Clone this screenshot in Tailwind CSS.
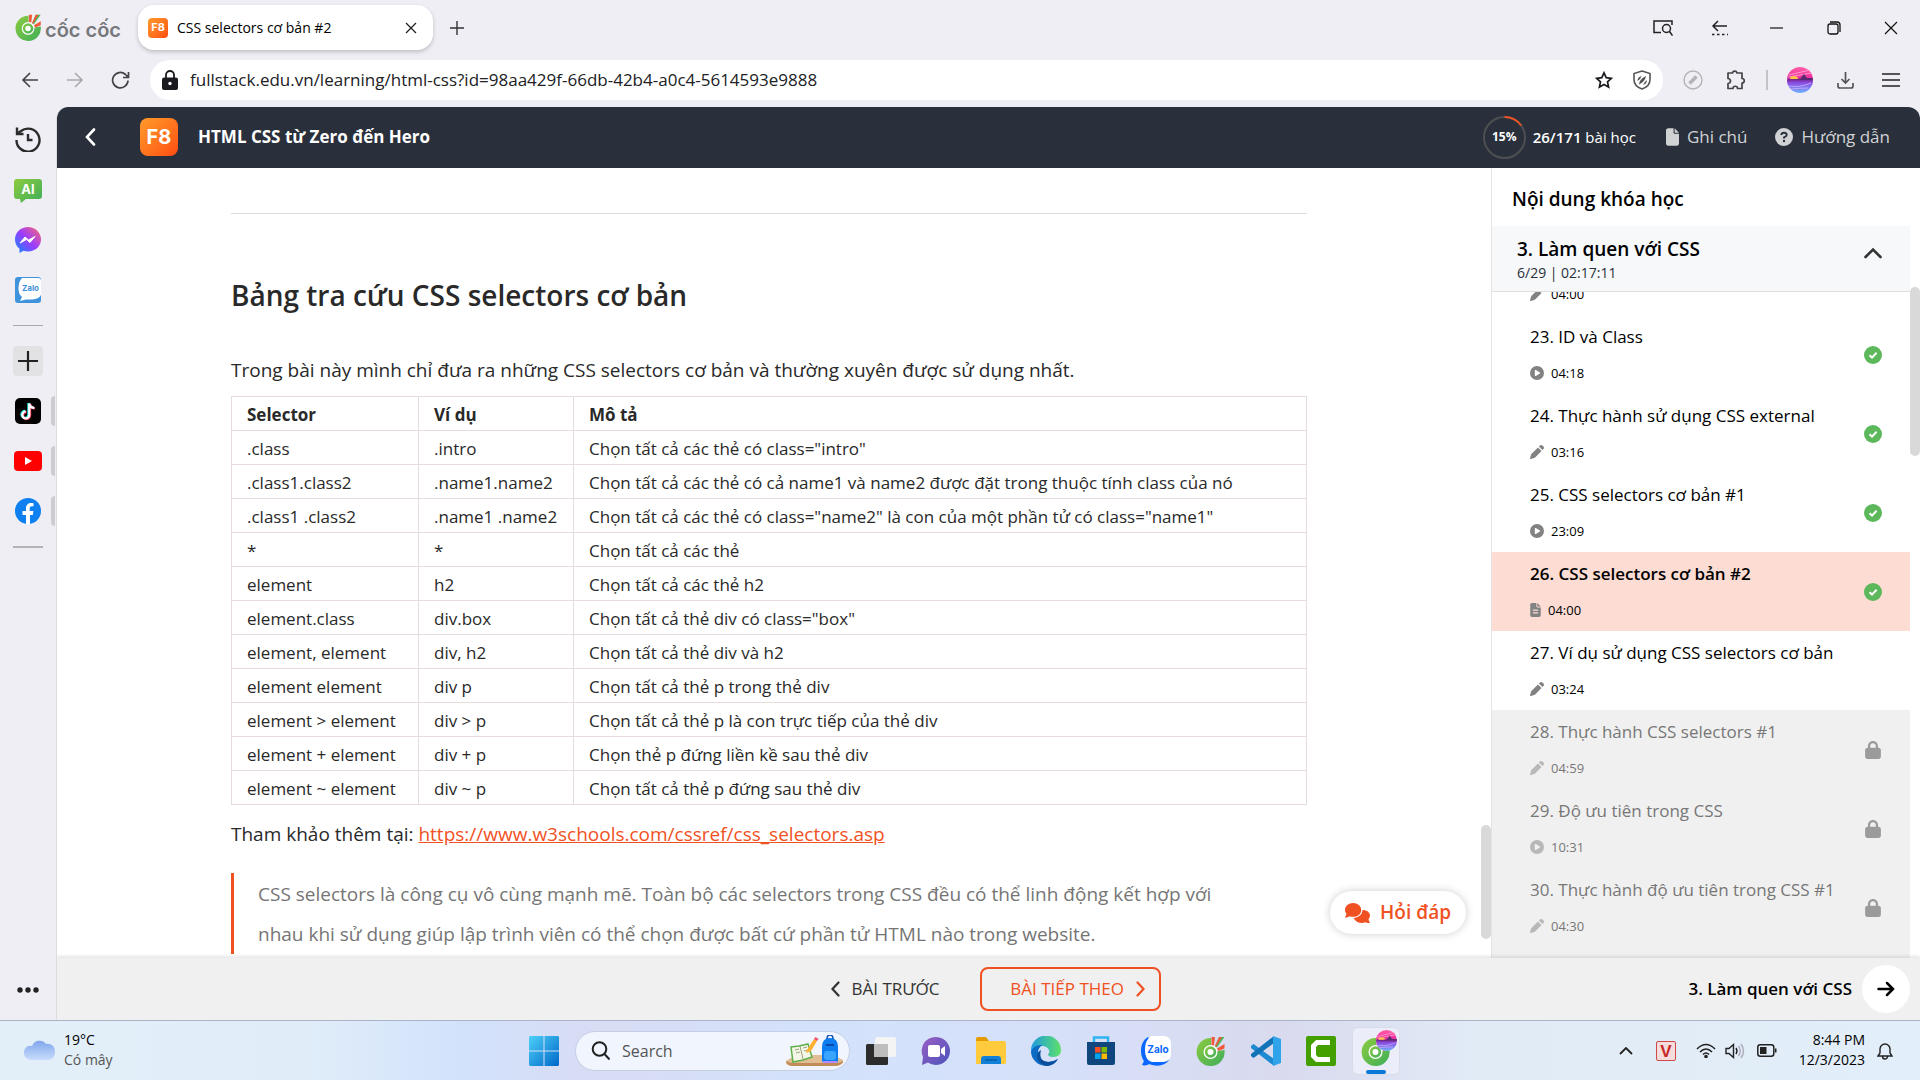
<!DOCTYPE html>
<html lang="vi">
<head>
<meta charset="utf-8">
<title>CSS selectors cơ bản #2</title>
<script src="https://cdn.jsdelivr.net/npm/@tailwindcss/browser@4"></script>
</head>
<body class="h-screen flex flex-col overflow-hidden bg-[#efeef4] font-['Segoe_UI','Open_Sans','Noto_Sans',sans-serif] text-black">

<!-- Shared icons -->
<svg class="absolute size-0" aria-hidden="true">
  <defs>
    <linearGradient id="gCoc" x1="0" y1="0" x2="1" y2="1"><stop offset="0" stop-color="#8ccb3f"/><stop offset="1" stop-color="#3fae5a"/></linearGradient>
    <linearGradient id="gSky" x1="0" y1="0" x2="0" y2="1"><stop offset="0" stop-color="#ff5fa8"/><stop offset=".4" stop-color="#f02fa0"/><stop offset=".5" stop-color="#7a2a9a"/><stop offset=".6" stop-color="#8a4be0"/><stop offset="1" stop-color="#6fb4ff"/></linearGradient>
    <linearGradient id="gWin" gradientUnits="userSpaceOnUse" x1="0" y1="0" x2="30" y2="30"><stop offset="0" stop-color="#4dd0f8"/><stop offset="1" stop-color="#0068c8"/></linearGradient>
  </defs>
  <symbol id="coc" viewBox="0 0 32 32">
    <path d="M16 3A14 14 0 1 0 29.500 15L16 17z" fill="url(#gCoc)"/>
    <circle cx="15.500" cy="17" r="7" fill="#fff"/><circle cx="15.500" cy="17" r="5.700" fill="url(#gCoc)"/><circle cx="15.500" cy="17" r="3" fill="#fff"/>
    <path d="M16.500 2h3.500l-1 8.500-2.500-.5zM29.500 9v4.500l-6 2.500-1.500-2.500z" fill="#f1593a"/><path d="M24 2h5.500L22 12.500 20 11z" fill="#4fb95a"/><path d="M24 2h3l-6 10-1-1z" fill="#f1593a"/>
  </symbol>
  <symbol id="play" viewBox="0 0 512 512"><path fill="currentColor" fill-rule="evenodd" d="M256 0a256 256 0 1 0 0 512a256 256 0 0 0 0-512zM190 147c8-4 17-4 25 0l144 88c15 9 15 33 0 42l-144 88c-16 9-39-2-39-21V168c0-9 5-17 14-21z"/></symbol>
  <symbol id="pen" viewBox="0 0 512 512"><path fill="currentColor" d="M363 19L325 57l130 130 38-38c25-25 25-65 0-90L453 19c-25-25-65-25-90 0zM292 90L59 323c-11 11-18 24-22 38L1 481c-3 9 0 18 6 24s15 9 24 6l120-35c14-4 27-12 37-22l234-234z"/></symbol>
  <symbol id="doc" viewBox="0 0 384 512"><path fill="currentColor" fill-rule="evenodd" d="M64 0C29 0 0 29 0 64v384c0 35 29 64 64 64h256c35 0 64-29 64-64V160H256c-18 0-32-14-32-32V0zM256 0v128h128zM96 240h192v40H96zm0 100h192v40H96z"/></symbol>
  <symbol id="file" viewBox="0 0 384 512"><path fill="currentColor" d="M0 64C0 29 29 0 64 0h160v128c0 18 14 32 32 32h128v288c0 35-29 64-64 64H64c-35 0-64-29-64-64zM384 128H256V0z"/></symbol>
  <symbol id="check" viewBox="0 0 18 18"><circle cx="9" cy="9" r="9" fill="#5db85c"/><path d="M5.500 9.300 8 11.600l4.600-4.800" fill="none" stroke="#fff" stroke-width="2"/></symbol>
  <symbol id="lock" viewBox="0 0 448 512"><path fill="currentColor" d="M144 144v48h160v-48c0-44-36-80-80-80s-80 36-80 80zm-64 48v-48C80 64 144 0 224 0s144 64 144 144v48h16c35 0 64 29 64 64v192c0 35-29 64-64 64H64c-35 0-64-29-64-64V256c0-35 29-64 64-64z"/></symbol>
  <symbol id="sunset" viewBox="0 0 26 26"><circle cx="13" cy="13" r="13" fill="url(#gSky)"/><path d="M2 8l21-5M1.500 10l23-4" stroke="#ff9acb"/><path d="M3 12a4 3 0 0 1 8 0z" fill="#ffc24a"/><path d="M13 12l4-5 3 4h5.500l.3 2H.3z" fill="#5a2a70"/><path d="M2 19q10 2 22-3M4 22q8-1 17-1" stroke="#c9a0ff" fill="none"/></symbol>
</svg>

<!-- Tab strip -->
<header class="flex h-[55px] shrink-0 items-center pl-[14px]">
  <div class="flex w-[124px] items-center text-[#77787b]">
    <svg class="size-[29px]"><use href="#coc"/></svg>
    <svg class="h-8 w-[80px]" viewBox="0 0 80 32"><text x="2" y="25" font-family="Inter, sans-serif" font-weight="600" font-size="20" fill="currentColor">cốc cốc</text></svg>
  </div>
  <div class="flex h-[45px] w-[295px] items-center rounded-2xl bg-white pr-[10px] pl-[10px] shadow-[0_2px_4px_rgba(0,0,0,0.2)]">
    <span class="grid size-5 place-items-center rounded bg-linear-to-br from-[#ff9a2a] to-[#ff4a12] font-['Inter',sans-serif] text-[11px] leading-none font-bold text-white">F8</span>
    <span class="ml-[9px] flex-1 text-[14px]">CSS selectors cơ bản #2</span>
    <button aria-label="Đóng thẻ" class="grid size-6 place-items-center"><svg class="size-3" viewBox="0 0 12 12" stroke="#222" stroke-width="1.300"><path d="M1 1l10 10M11 1L1 11"/></svg></button>
  </div>
  <button aria-label="Thẻ mới" class="ml-3 grid size-6 place-items-center"><svg class="size-4" viewBox="0 0 16 16" stroke="#333" stroke-width="1.400"><path d="M8 1v14M1 8h14"/></svg></button>
  <div class="ml-auto flex h-full">
    <button aria-label="Tìm thẻ" class="grid w-[57px] place-items-center"><svg class="h-4 w-5" viewBox="0 0 20 16" fill="none" stroke="#222" stroke-width="1.500"><path d="M8 12.500H1V1h18v4"/><circle cx="13.500" cy="8.500" r="4"/><path d="M16.500 11.500l3 4"/></svg></button>
    <button aria-label="Thẻ bên" class="grid w-[57px] place-items-center"><svg class="h-4 w-[18px]" viewBox="0 0 18 16" fill="none" stroke="#222" stroke-width="1.500"><path d="M7 1L2 6l5 5M2 6h14"/><path d="M1 14.500h16" stroke-dasharray="2.500 2.500"/></svg></button>
    <button aria-label="Thu nhỏ" class="grid w-[57px] place-items-center"><svg class="h-4 w-[14px]" viewBox="0 0 14 16" stroke="#111" stroke-width="1.200"><path d="M0 8h13"/></svg></button>
    <button aria-label="Khôi phục" class="grid w-[57px] place-items-center"><svg class="size-[14px]" viewBox="0 0 14 14" fill="none" stroke="#111" stroke-width="1.300"><rect x="1" y="3" width="10" height="10" rx="2"/><path d="M3 1h7a3 3 0 0 1 3 3v7"/></svg></button>
    <button aria-label="Đóng" class="grid w-[58px] place-items-center"><svg class="size-[14px]" viewBox="0 0 14 14" stroke="#111" stroke-width="1.200"><path d="M1 1l12 12M13 1L1 13"/></svg></button>
  </div>
</header>

<!-- Address bar -->
<div class="flex h-[52px] shrink-0 items-center pb-[2px] pl-[21px]">
  <div class="flex w-[129px] items-center gap-[27px]">
    <button aria-label="Quay lại"><svg class="size-[18px]" viewBox="0 0 18 18" fill="none" stroke="#444" stroke-width="1.600"><path d="M9 2L2 9l7 7M2 9h15"/></svg></button>
    <button aria-label="Tiến"><svg class="size-[18px]" viewBox="0 0 18 18" fill="none" stroke="#aaa" stroke-width="1.600"><path d="M9 2l7 7-7 7M16 9H1"/></svg></button>
    <button aria-label="Tải lại"><svg class="size-[19px]" viewBox="0 0 19 19" fill="none" stroke="#444" stroke-width="1.700"><path d="M17 9.500A7.700 7.700 0 1 1 14.500 3.500L17 6M17.500 1v5.500H12"/></svg></button>
  </div>
  <div class="flex h-10 flex-1 items-center gap-3 rounded-full bg-white pr-[12px] pl-3">
    <svg class="h-5 w-4 text-[#1b1b1f]" viewBox="0 0 16 20"><path d="M4 8V5a4 4 0 0 1 8 0v3" fill="none" stroke="currentColor" stroke-width="1.800"/><rect y="7.500" width="16" height="12.500" rx="2" fill="currentColor"/><circle cx="8" cy="13.500" r="1.700" fill="#fff"/></svg>
    <input aria-label="Địa chỉ" class="flex-1 text-[17px] text-[#202124] outline-none" value="fullstack.edu.vn/learning/html-css?id=98aa429f-66db-42b4-a0c4-5614593e9888">
    <button aria-label="Đánh dấu"><svg class="size-[18px]" viewBox="0 0 18 18" fill="none" stroke="#1b1b1f" stroke-width="1.700"><path d="M9 1.800l2.200 4.900 5.200.6-3.900 3.600 1.100 5.200L9 13.500l-4.600 2.600 1.100-5.200-3.900-3.600 5.200-.6z"/></svg></button>
    <button aria-label="Bảo vệ" class="ml-2"><svg class="h-5 w-[18px]" viewBox="0 0 18 20" fill="none" stroke="#555" stroke-width="1.600"><path d="M9 1l8 2.500v6c0 4.500-3.500 8-8 9.500-4.500-1.500-8-5-8-9.500v-6z"/><path d="M4.500 11q0-4 4-5-.5 3-4 5zM6 14.500q0-5 7-8.500-1 6-7 8.500zM10 15q4-1 4-5-3 2-4 5z" fill="#555" stroke="none"/></svg></button>
  </div>
  <div class="flex w-[257px] items-center pl-5">
    <svg class="size-5" viewBox="0 0 20 20" fill="none" stroke="#b4b4b6" stroke-width="1.400"><circle cx="10" cy="10" r="9"/><path d="M6.500 13.500l7-7" stroke-width="3.600"/></svg>
    <svg class="ml-[23px] size-5" viewBox="0 0 20 20" fill="none" stroke="#444" stroke-width="1.700"><path d="M2 3h4.500a2.300 2.300 0 0 1 4.500 0H16v5.500a2.200 2.200 0 0 1 0 4.500v5.500h-4.500a2.200 2.200 0 0 0-4.500 0H2V13.500a2.400 2.400 0 0 0 0-5z" stroke-linejoin="round"/></svg>
    <i class="ml-5 h-5 w-[2px] bg-[#c4c4c8]"></i>
    <svg class="ml-[19px] size-[26px]"><use href="#sunset"/></svg>
    <svg class="ml-6 size-[17px]" viewBox="0 0 17 17" fill="none" stroke="#555" stroke-width="1.700"><path d="M8.500 0v11M4.500 7l4 4 4-4M1 11v3a2 2 0 0 0 2 2h11a2 2 0 0 0 2-2v-3"/></svg>
    <svg class="ml-7 h-[14px] w-[18px]" viewBox="0 0 18 14" stroke="#555" stroke-width="1.800"><path d="M0 1h18M0 7h18M0 13h18"/></svg>
  </div>
</div>

<div class="flex min-h-0 flex-1">
  <!-- Browser side bar -->
  <nav aria-label="Thanh bên" class="flex w-[56px] shrink-0 flex-col items-center pt-[19px]">
    <svg class="size-[26px]" viewBox="0 0 26 26" fill="none" stroke="#2b2b2b" stroke-width="2.400"><path d="M1.500 14A11.500 11.500 0 1 0 6 5L2.500 7.500"/><path d="M2 1.500v6.500h6.500M13 8v6h4.500"/></svg>
    <svg class="mt-[27px] h-6 w-7" viewBox="0 0 28 24"><path d="M3 0h22a3 3 0 0 1 3 3v14a3 3 0 0 1-3 3H12l-5 4-1-4H3a3 3 0 0 1-3-3V3a3 3 0 0 1 3-3z" fill="url(#gCoc)"/><text x="14" y="14.500" text-anchor="middle" font-family="Inter, sans-serif" font-weight="700" font-size="13" fill="#fff">AI</text></svg>
    <svg class="mt-6 size-[26px]" viewBox="0 0 26 26"><linearGradient id="gM" x1="0" y1="1" x2="1" y2="0"><stop offset="0" stop-color="#0a8cff"/><stop offset=".5" stop-color="#9a3cff"/><stop offset="1" stop-color="#ff6a70"/></linearGradient><path d="M13 0C6 0 0 5 0 12.500c0 4 1.800 7 4.500 9.300V26l4-2.200c1.400.4 3 .6 4.500.6 7 0 13-5 13-12S20 0 13 0z" fill="url(#gM)"/><path d="M5 16l5-6 3.500 3L20 9.500l-5 6-3.500-3z" fill="#fff" stroke="#fff" stroke-linejoin="round"/></svg>
    <svg class="mt-6 size-[26px]" viewBox="0 0 26 26"><rect width="26" height="26" rx="3" fill="#3f92dc"/><path d="M7 1h16q3 0 3 3v14q-2 4-9 4.500H11L5 24l2-4Q3 17 3.500 10 4 4 7 1z" fill="#fff"/><text x="15.500" y="14" text-anchor="middle" font-family="Inter, sans-serif" font-weight="700" font-size="8" fill="#3f92dc">Zalo</text></svg>
    <i class="mt-[22px] h-px w-[30px] bg-[#a8a8ac]"></i>
    <button aria-label="Thêm" class="mt-5 grid size-[30px] place-items-center rounded bg-[#e2e2e4]"><svg class="size-5" viewBox="0 0 20 20" stroke="#222" stroke-width="2.200"><path d="M10 0v20M0 10h20"/></svg></button>
    <div class="relative mt-5 flex h-[30px] w-full items-center justify-center"><svg class="size-[26px]" viewBox="0 0 26 26"><rect width="26" height="26" rx="5" fill="#000"/><path d="M13.500 5v11.500a3.500 3.500 0 1 1-3.500-3.500M13.500 5q.5 4 5 4.500" fill="none" stroke="#25f4ee" stroke-width="2.400"/><path d="M15 6v11.500a3.500 3.500 0 1 1-3.500-3.500M15 6q.5 4 5 4.500" fill="none" stroke="#fe2c55" stroke-width="2.400"/><path d="M14.300 5.500V17a3.500 3.500 0 1 1-3.500-3.500M14.300 5.500q.5 4 5 4.500" fill="none" stroke="#fff" stroke-width="2.200"/></svg><i class="absolute right-px h-[30px] w-1 rounded-l bg-[#cdcdd0]"></i></div>
    <div class="relative mt-5 flex h-[30px] w-full items-center justify-center"><svg class="h-5 w-7" viewBox="0 0 28 20"><rect width="28" height="20" rx="4" fill="#f00"/><path d="M11 6l7 4-7 4z" fill="#fff"/></svg><i class="absolute right-px h-[30px] w-1 rounded-l bg-[#cdcdd0]"></i></div>
    <div class="relative mt-5 flex h-[30px] w-full items-center justify-center"><svg class="size-[26px]" viewBox="0 0 26 26"><circle cx="13" cy="13" r="13" fill="#1080f0"/><path d="M11 26v-9H7.500v-4H11v-2.500C11 7 13 5 16.200 5c1.200 0 2.300.2 2.300.2v3h-1.800c-1.500 0-2 1-2 2V13h3.700l-.6 4H15v9z" fill="#fff"/></svg><i class="absolute right-px h-[30px] w-1 rounded-l bg-[#cdcdd0]"></i></div>
    <i class="mt-5 h-[2px] w-[30px] bg-[#b4b4b8]"></i>
    <button aria-label="Thêm nữa" class="mt-auto mb-[26px]"><svg class="h-2 w-[22px]" viewBox="0 0 22 8" fill="#222"><circle cx="3" cy="4" r="2.700"/><circle cx="11" cy="4" r="2.700"/><circle cx="19" cy="4" r="2.700"/></svg></button>
  </nav>

  <!-- Web page -->
  <div class="flex min-w-0 flex-1 flex-col overflow-hidden rounded-t-xl border-l border-[#dcdce0] bg-white">
    <div class="flex h-[61px] shrink-0 items-center bg-[#29303b] pr-[30px] pb-px pl-[27px] text-white">
      <a href="#" aria-label="Quay lại"><svg class="h-[18px] w-3" viewBox="0 0 12 18" fill="none" stroke="#fff" stroke-width="2.600" stroke-linecap="round"><path d="M10 1.500L3 9l7 7.500"/></svg></a>
      <a href="#" class="ml-11 grid size-[38px] place-items-center rounded-lg bg-linear-to-br from-[#ff9a2a] to-[#ff4a12] font-['Inter',sans-serif] text-[20px] leading-none font-bold">F8</a>
      <h1 class="ml-5 text-[17px] font-bold">HTML CSS từ Zero đến Hero</h1>
      <div class="ml-auto flex items-center">
        <div class="relative grid size-[43px] place-items-center text-[12px] font-bold"><svg class="absolute inset-0 size-[43px]" viewBox="0 0 43 43" fill="none" stroke-width="2"><circle cx="21.500" cy="21.500" r="20.500" stroke="#4d4f50"/><circle cx="21.500" cy="21.500" r="20.500" stroke="#f05123" pathLength="100" stroke-dasharray="15 85" transform="rotate(-90 21.500 21.500)"/></svg>15%</div>
        <p class="ml-[7px] text-[15px]"><b class="font-semibold">26/171</b> bài học</p>
        <a href="#" class="ml-[30px] flex items-center gap-2 text-[17px] text-[#d0d2d4]"><svg class="h-[18px] w-[13px]"><use href="#file"/></svg>Ghi chú</a>
        <a href="#" class="ml-[28px] flex items-center gap-2 text-[17px] text-[#d0d2d4]"><svg class="size-[18px]" viewBox="0 0 18 18"><circle cx="9" cy="9" r="9" fill="currentColor"/><path d="M6.300 7q.2-2.300 2.700-2.300T11.700 7Q11.700 8.300 9 9.300v1.200" fill="none" stroke="#29303b" stroke-width="1.900"/><circle cx="9" cy="13" r="1.200" fill="#29303b"/></svg>Hướng dẫn</a>
      </div>
    </div>

    <div class="flex min-h-0 flex-1">
      <main class="relative flex min-w-0 flex-1 overflow-hidden">
        <article class="mx-auto w-full max-w-[1076px] text-[19px] leading-8 text-[#292929]">
          <hr class="mt-[45px] border-[#dcdcdc]">
          <h2 class="mt-[61px] text-[28px] leading-10 font-semibold">Bảng tra cứu CSS selectors cơ bản</h2>
          <p class="mt-[39px]">Trong bài này mình chỉ đưa ra những CSS selectors cơ bản và thường xuyên được sử dụng nhất.</p>
          <table class="mt-[10px] w-full table-fixed border-collapse text-left text-[17px] leading-6 [&_td]:border [&_td]:border-[#e6dcdc] [&_td]:px-[15px] [&_td]:pt-[2px] [&_th]:border [&_th]:border-[#e6dcdc] [&_th]:px-[15px] [&_th]:pt-[2px] [&_tr]:h-[34px]">
            <colgroup><col class="w-[187px]"><col class="w-[155px]"><col></colgroup>
            <thead><tr><th>Selector</th><th>Ví dụ</th><th>Mô tả</th></tr></thead>
            <tbody>
              <tr><td>.class</td><td>.intro</td><td>Chọn tất cả các thẻ có class="intro"</td></tr>
              <tr><td>.class1.class2</td><td>.name1.name2</td><td>Chọn tất cả các thẻ có cả name1 và name2 được đặt trong thuộc tính class của nó</td></tr>
              <tr><td>.class1 .class2</td><td>.name1 .name2</td><td>Chọn tất cả các thẻ có class="name2" là con của một phần tử có class="name1"</td></tr>
              <tr><td>*</td><td>*</td><td>Chọn tất cả các thẻ</td></tr>
              <tr><td>element</td><td>h2</td><td>Chọn tất cả các thẻ h2</td></tr>
              <tr><td>element.class</td><td>div.box</td><td>Chọn tất cả thẻ div có class="box"</td></tr>
              <tr><td>element, element</td><td>div, h2</td><td>Chọn tất cả thẻ div và h2</td></tr>
              <tr><td>element element</td><td>div p</td><td>Chọn tất cả thẻ p trong thẻ div</td></tr>
              <tr><td>element &gt; element</td><td>div &gt; p</td><td>Chọn tất cả thẻ p là con trực tiếp của thẻ div</td></tr>
              <tr><td>element + element</td><td>div + p</td><td>Chọn thẻ p đứng liền kề sau thẻ div</td></tr>
              <tr><td>element ~ element</td><td>div ~ p</td><td>Chọn tất cả thẻ p đứng sau thẻ div</td></tr>
            </tbody>
          </table>
          <p class="mt-[13px]">Tham khảo thêm tại: <a href="#" class="text-[#f05123] underline">https://www.w3schools.com/cssref/css_selectors.asp</a></p>
          <blockquote class="mt-[23px] border-l-[3px] border-[#f05123] pt-px pr-20 pl-6 leading-10 text-[#757575]">CSS selectors là công cụ vô cùng mạnh mẽ. Toàn bộ các selectors trong CSS đều có thể linh động kết hợp với nhau khi sử dụng giúp lập trình viên có thể chọn được bất cứ phần tử HTML nào trong website.</blockquote>
        </article>
        <div class="flex w-[10px] flex-col justify-end"><i class="mb-[19px] h-[114px] rounded-full bg-[#d9d9d9]"></i></div>
        <button class="absolute right-[25px] bottom-[24px] flex h-[43px] items-center gap-[10px] rounded-full bg-white px-[15px] text-[19px] font-semibold text-[#f05123] shadow-[0_0_8px_rgba(0,0,0,0.2)]"><svg class="h-5 w-[25px]" viewBox="0 0 640 512" fill="currentColor"><path d="M208 0C93 0 0 79 0 176c0 38 14 73 38 102-3 30-16 57-36 78-6 12 2 20 14 18 38-3 70-16 96-36 29 11 62 17 96 17 115 0 208-82 208-179S323 0 208 0z"/><path d="M448 176c0 112-104 202-230 207 38 77 123 129 214 129 34 0 67-6 96-17 26 20 58 17 96 17 12-2 18-14 10-24-20-20-29-40-32-70 24-29 38-64 38-102 0-78-80-140-192-140z"/></svg>Hỏi đáp</button>
      </main>

      <!-- Course outline -->
      <aside class="flex w-[429px] shrink-0 border-l border-[#e3e3e3]">
        <div class="flex min-w-0 flex-1 flex-col">
          <h2 class="flex h-[58px] shrink-0 items-center px-5 pt-1 text-[19px] font-semibold">Nội dung khóa học</h2>
          <div class="flex h-[66px] shrink-0 items-start justify-between border-b border-[#dedfe1] bg-[#f7f8fa] pt-[11px] pr-7 pl-[25px]">
            <div><h3 class="text-[19px] leading-6 font-semibold">3. Làm quen với CSS</h3><p class="text-[14px] leading-6 text-[#29303b]">6/29 | 02:17:11</p></div>
            <svg class="mt-[10px] h-3 w-[18px]" viewBox="0 0 18 12" fill="none" stroke="#333" stroke-width="2.600" stroke-linecap="round"><path d="M1.500 10L9 2.500l7.500 7.500"/></svg>
          </div>
          <!-- Scrolled list: the first row sits partly under the section heading -->
          <div class="min-h-0 flex-1 overflow-hidden">
            <ul class="-mt-[22px] text-[17px] leading-6 [&>li]:flex [&>li]:h-[79px] [&>li]:items-center [&>li]:justify-between [&>li]:pr-7 [&>li]:pl-[38px] [&_p]:mt-3 [&_p]:flex [&_p]:items-center [&_p]:gap-[7px] [&_p]:text-[13px] [&_p_svg]:text-[#828282]">
              <li class="max-h-[45px] items-start!"><p><svg class="size-[14px]"><use href="#pen"/></svg>04:00</p></li>
              <li><div><a href="#">23. ID và Class</a><p><svg class="size-[14px]"><use href="#play"/></svg>04:18</p></div><svg class="size-[18px]"><use href="#check"/></svg></li>
              <li><div><a href="#">24. Thực hành sử dụng CSS external</a><p><svg class="size-[14px]"><use href="#pen"/></svg>03:16</p></div><svg class="size-[18px]"><use href="#check"/></svg></li>
              <li><div><a href="#">25. CSS selectors cơ bản #1</a><p><svg class="size-[14px]"><use href="#play"/></svg>23:09</p></div><svg class="size-[18px]"><use href="#check"/></svg></li>
              <li class="bg-[#fcdcd3]"><div><a href="#" class="font-semibold">26. CSS selectors cơ bản #2</a><p><svg class="h-[14px] w-[11px]"><use href="#doc"/></svg>04:00</p></div><svg class="size-[18px]"><use href="#check"/></svg></li>
              <li><div><a href="#">27. Ví dụ sử dụng CSS selectors cơ bản</a><p><svg class="size-[14px]"><use href="#pen"/></svg>03:24</p></div></li>
              <li class="bg-[#f0f0f0] text-[#777] [&_p_svg]:opacity-50"><div><a href="#">28. Thực hành CSS selectors #1</a><p><svg class="size-[14px]"><use href="#pen"/></svg>04:59</p></div><svg class="size-[18px] text-[#9b9b9b]"><use href="#lock"/></svg></li>
              <li class="bg-[#f0f0f0] text-[#777] [&_p_svg]:opacity-50"><div><a href="#">29. Độ ưu tiên trong CSS</a><p><svg class="size-[14px]"><use href="#play"/></svg>10:31</p></div><svg class="size-[18px] text-[#9b9b9b]"><use href="#lock"/></svg></li>
              <li class="bg-[#f0f0f0] text-[#777] [&_p_svg]:opacity-50"><div><a href="#">30. Thực hành độ ưu tiên trong CSS #1</a><p><svg class="size-[14px]"><use href="#pen"/></svg>04:30</p></div><svg class="size-[18px] text-[#9b9b9b]"><use href="#lock"/></svg></li>
              <li class="bg-[#f0f0f0]"></li>
            </ul>
          </div>
        </div>
        <div class="w-[10px]"><i class="mt-[119px] block h-[169px] rounded-full bg-[#d9d9d9]"></i></div>
      </aside>
    </div>

    <footer class="z-10 grid h-[62px] shrink-0 grid-cols-[1fr_auto_1fr] items-center bg-[#f0f0f0] shadow-[0_-2px_3px_rgba(0,0,0,0.1)]">
      <div class="col-start-2 flex items-center gap-[14px]">
        <button class="flex h-11 w-[150px] items-center justify-center gap-3 pr-3 text-[17px] font-medium text-[#333]"><svg class="h-4 w-[9px]" viewBox="0 0 9 16" fill="none" stroke="currentColor" stroke-width="2.200" stroke-linecap="round"><path d="M7.500 1.500L1.500 8l6 6.500"/></svg>BÀI TRƯỚC</button>
        <button class="flex h-11 w-[181px] items-center justify-end gap-3 rounded-lg border-2 border-[#f05123] pr-[14px] text-[17px] font-medium text-[#f05123]">BÀI TIẾP THEO<svg class="h-4 w-[9px]" viewBox="0 0 9 16" fill="none" stroke="currentColor" stroke-width="2.200" stroke-linecap="round"><path d="M1.500 1.500L7.500 8l-6 6.500"/></svg></button>
      </div>
      <div class="flex items-center justify-end gap-[10px] pr-[10px]">
        <strong class="text-[17px] font-semibold">3. Làm quen với CSS</strong>
        <button aria-label="Mở mục lục" class="grid size-12 place-items-center rounded-full bg-white"><svg class="h-4 w-[18px]" viewBox="0 0 18 16" fill="none" stroke="#000" stroke-width="2.500" stroke-linecap="round"><path d="M1.500 8h14M10 2l6 6-6 6"/></svg></button>
      </div>
    </footer>
  </div>
</div>

<!-- Task bar -->
<footer class="grid h-[60px] shrink-0 grid-cols-[1fr_auto_1fr] items-center border-t border-[#a9b4c6] bg-[linear-gradient(90deg,#e3eff8_0%,#e0edf9_16%,#d2e2fb_24%,#d8dcf4_31%,#d3e2fb_43%,#d6e0f9_55%,#d9daee_67%,#e1ebf6_77%,#e2eef9_100%)]">
  <div class="flex items-center gap-[9px] pl-6">
    <svg class="mb-1 h-[22px] w-[31px]" viewBox="0 0 31 22"><linearGradient id="gCl" x1="0" y1="0" x2="0" y2="1"><stop offset="0" stop-color="#7fa6ee"/><stop offset="1" stop-color="#c9dcfb"/></linearGradient><path d="M8 8a8 8 0 0 1 14-2c6-1 9 3 9 8s-3 8-7 8H8c-5 0-8-3-8-7s3-8 8-7z" fill="url(#gCl)"/></svg>
    <div class="pb-[2px] text-[14px] leading-5"><p>19°C</p><p class="text-[#555]">Có mây</p></div>
  </div>
  <div class="flex items-center gap-[7px] [&>button]:grid [&>button]:size-12 [&>button]:place-items-center">
    <button aria-label="Start"><svg class="size-[30px]" viewBox="0 0 30 30" fill="url(#gWin)"><path d="M1 0h13.500v14.500H0V1zM15.500 0H29l1 1v13.500H15.500zM0 15.500h14.500V30H1l-1-1zM15.500 15.500H30V29l-1 1H15.500z"/></svg></button>
    <label class="flex h-10 w-[275px] items-center rounded-full border border-[#c5cfe4] bg-[#f1f5fd] pl-[15px]">
      <svg class="size-[19px]" viewBox="0 0 19 19" fill="none" stroke="#222" stroke-width="2"><circle cx="8.500" cy="8" r="6.800"/><path d="M13.500 13l5 5.500"/></svg>
      <input type="search" aria-label="Search" placeholder="Search" class="ml-3 w-0 flex-1 text-[16px] outline-none placeholder:text-[#555]">
      <svg class="mr-[6px] h-8 w-[57px]" viewBox="0 0 57 32"><path d="M10 20h37l10 5v3q-3 3-8 3H7q-6 0-7-3v-2z" fill="#e0bd92"/><path d="M7 28h42q5 0 8-2v1q-3 4-8 4H7q-5 0-7-4v-1q3 2 7 2z" fill="#c08b58"/><path d="M5 12l8-1 9-2 4 13-9 3-10 2z" fill="#f4f7e8" stroke="#5fb04a" stroke-width="1.500"/><path d="M9 15l4-1M10 18l4-1M17 13l4-1M18 16l4-1M14 11l3 13" stroke="#9aa27a" fill="none"/><path d="M21 15L28 4l3 2-6 10-5 2z" fill="#ffb02e"/><path d="M28 4l1.500-2 3 2-1.500 2z" fill="#f0506a"/><path d="M36 12q0-9 8-9t8 9v13q0 3-3 3H39q-3 0-3-3z" fill="#0c7cf0"/><path d="M41 4q0-4 3-4t3 4" fill="none" stroke="#0a50b0" stroke-width="1.500"/><rect x="38" y="16" width="12" height="9" rx="3" fill="#3aa5ff"/><path d="M37 27h14" stroke="#b58aff" stroke-width="2"/><path d="M40 10h8" stroke="#063a90" stroke-width="1.500"/></svg>
    </label>
    <button aria-label="Task view"><svg class="size-[30px]" viewBox="0 0 30 30"><rect x="9" y="1" width="21" height="20" rx="2" fill="#f4f4f4"/><rect y="8" width="22" height="21" rx="1.500" fill="#2c2c2c"/><path d="M8 8h14v13H8z" fill="#bdbdbd"/></svg></button>
    <button aria-label="Chat"><svg class="size-[30px]" viewBox="0 0 30 30"><linearGradient id="gT" x1="0" y1="0" x2="1" y2="1"><stop offset="0" stop-color="#9a5fc4"/><stop offset="1" stop-color="#4b53bc"/></linearGradient><path d="M15 1a14 14 0 1 1-8 25.500L1 29l1-8A14 14 0 0 1 15 1z" fill="url(#gT)"/><rect x="7" y="9" width="12" height="12" rx="2" fill="#fff"/><path d="M20 13l4-3v10l-4-3z" fill="#fff"/></svg></button>
    <button aria-label="File Explorer"><svg class="size-[30px]" viewBox="0 0 30 30"><path d="M0 3q0-2 2-2h8l3 4H0z" fill="#e59c00"/><path d="M0 5h28q2 0 2 2v20q0 1-1 1H0z" fill="#ffcb3d"/><path d="M5 28v-5q0-3 3-3h14q3 0 3 3v5z" fill="#1080d8"/><path d="M9 24h12" stroke="#0a5aa8" stroke-width="1.500"/></svg></button>
    <button aria-label="Edge"><svg class="size-[30px]" viewBox="0 0 30 30"><linearGradient id="gE" x1="0" y1="0" x2="1" y2="0"><stop offset="0" stop-color="#1f9be0"/><stop offset="1" stop-color="#5ee06a"/></linearGradient><path d="M0 15A15 15 0 0 1 30 14q0 7-8 7-5 0-5-3 2-1 1-4-2-4-7-4-6 0-11 5z" fill="url(#gE)"/><path d="M0 15q4-7 11-6-4 3-4 8 1 8 10 9 5 0 10-3-4 7-12 7A15 15 0 0 1 0 15z" fill="#0c6cc4"/><path d="M10 14q-3 12 8 12 5 0 9-3-4 7-12 7-9-3-9-10 0-4 4-6z" fill="#0a4f9c"/></svg></button>
    <button aria-label="Store"><svg class="size-[30px]" viewBox="0 0 30 30"><path d="M8 8V1.500h14V8" fill="none" stroke="#2fb4f0" stroke-width="2.500"/><path d="M1 6h28v21q0 2-2 2H3q-2 0-2-2z" fill="#10467e"/><path d="M9 11h5.500v5.500H9z" fill="#f25022"/><path d="M15.500 11H21v5.500h-5.500z" fill="#7fba00"/><path d="M9 17.500h5.500V23H9z" fill="#00a4ef"/><path d="M15.500 17.500H21V23h-5.500z" fill="#ffb900"/></svg></button>
    <button aria-label="Zalo"><svg class="size-8" viewBox="0 0 32 32"><path d="M8 2C3 5 1 10 1 16c0 5 2 9 3 10l-2 4c3 1 6 0 7-1 8 3 16 2 20-4z" fill="#0a68ff"/><path d="M11 1h13a7 7 0 0 1 7 7v11c0 5-4 8-8 8H13C8 27 5 22 5 15S7 4 11 1z" fill="#fff"/><text x="18" y="18" text-anchor="middle" font-family="Inter, sans-serif" font-weight="700" font-size="10" fill="#0a68ff">Zalo</text></svg></button>
    <button aria-label="Cốc Cốc"><svg class="size-8"><use href="#coc"/></svg></button>
    <button aria-label="Visual Studio Code"><svg class="size-[30px]" viewBox="0 0 30 30"><path d="M0 10l2.500-2L23 23v7L0 12z" fill="#1f8ad2"/><path d="M23 0v7L2.500 22 0 20v-2z" fill="#1272b8"/><path d="M22 0l8 3v24l-8 3z" fill="#2fa4ea"/></svg></button>
    <button aria-label="Camtasia"><svg class="size-[30px]" viewBox="0 0 30 30"><rect width="30" height="30" rx="2" fill="#43a000"/><path d="M24 4v5H12l-2 2v8l2 2h12v5H10l-5-5V9l5-5z" fill="#fff"/></svg></button>
    <button aria-label="Cốc Cốc đang mở" class="relative rounded-md border border-[#d8dcea] bg-[#ebeef8]"><svg class="size-8"><use href="#coc"/></svg><svg class="absolute top-[2px] right-[2px] size-[21px]"><use href="#sunset"/></svg><i class="absolute bottom-0 h-1 w-5 rounded-full bg-[#0a78d6]"></i></button>
  </div>
  <div class="flex items-center justify-end pr-[27px]">
    <svg class="h-2 w-[14px]" viewBox="0 0 14 8" fill="none" stroke="#222" stroke-width="1.800"><path d="M1 7l6-6 6 6"/></svg>
    <svg class="ml-[23px] size-5" viewBox="0 0 20 20"><rect x=".5" y=".5" width="19" height="19" rx="1.500" fill="#f6dcdc" stroke="#d04848"/><text x="10" y="16" text-anchor="middle" font-family="Liberation Sans, sans-serif" font-weight="700" font-size="17" fill="#c62828">V</text></svg>
    <svg class="ml-5 h-[15px] w-5" viewBox="0 0 20 15" fill="none" stroke="#222" stroke-width="1.600"><path d="M1 6q9-9 18 0M4 9q6-6 12 0M7 11.500q3-3 6 0"/><circle cx="10" cy="13.500" r="1" fill="#222"/></svg>
    <svg class="ml-[9px] h-4 w-5" viewBox="0 0 20 16" fill="none" stroke="#222" stroke-width="1.400"><path d="M1 5.500h3L8.500 1.500v13L4 10.500H1z"/><path d="M11 5q2 3 0 6"/><path d="M13.500 3q3.500 5 0 10M16 1q5 7 0 14" stroke="#aab"/></svg>
    <svg class="ml-3 h-[13px] w-5" viewBox="0 0 20 13"><rect x=".8" y=".8" width="16" height="11.400" rx="2.500" fill="none" stroke="#222" stroke-width="1.500"/><rect x="3" y="3" width="6.500" height="7" fill="#222"/><path d="M18 4.500h1.500v4H18z" fill="#222"/></svg>
    <div class="ml-[18px] w-[70px] pb-[2px] text-right text-[14px] leading-5 whitespace-nowrap"><p>8:44 PM</p><p>12/3/2023</p></div>
    <svg class="ml-3 h-[18px] w-4" viewBox="0 0 16 18" fill="none" stroke="#222" stroke-width="1.400"><path d="M1 14l2-3V7a5 5 0 0 1 10 0v4l2 3zM5.500 14.500a2.500 2.500 0 0 0 5 0"/></svg>
  </div>
</footer>
</body>
</html>
